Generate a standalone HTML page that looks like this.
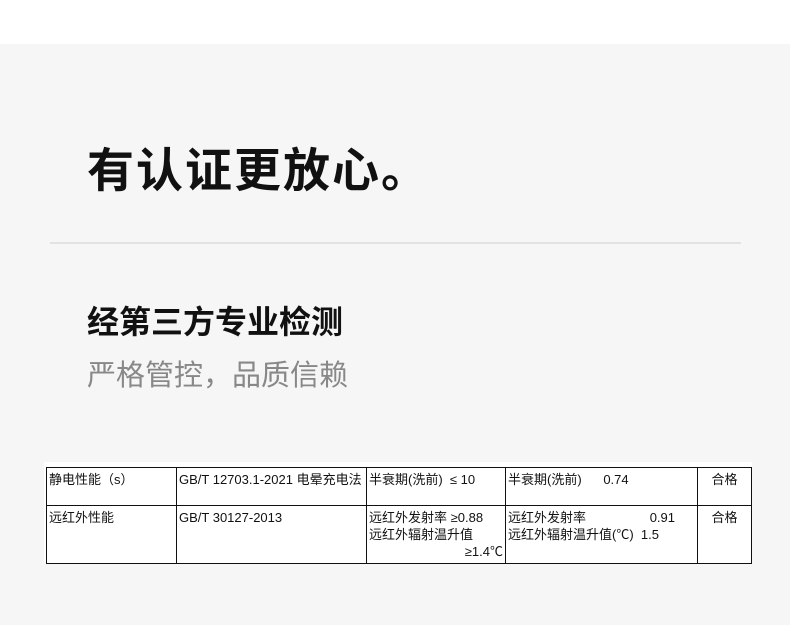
<!DOCTYPE html><html><head><meta charset="utf-8"><style>
body{margin:0;width:790px;height:625px;background:#fff;position:relative;overflow:hidden;font-family:"Liberation Sans","Noto Sans CJK SC",sans-serif}
.bg{position:absolute;left:0;top:44px;width:790px;height:581px;background:#f6f6f6}
.t{position:absolute;left:87px;top:141px;font-size:47px;font-weight:bold;color:#111;line-height:60px;letter-spacing:2px}
.hr{position:absolute;left:50px;top:242px;width:691px;height:2px;background:#e2e2e2}
.h2{position:absolute;left:87px;top:302px;font-size:32px;font-weight:bold;color:#111;line-height:40px}
.h3{position:absolute;left:87px;top:356px;font-size:29px;color:#888;line-height:40px}
.tb{position:absolute;left:44px;top:462px;width:708px;height:101px;background:#fff}
table{position:absolute;left:46px;top:467px;border-collapse:collapse;font-size:13px;color:#111;table-layout:fixed;width:705px}
td{border:1px solid #111;vertical-align:top;padding:3px 2px;line-height:17px;overflow:hidden}
</style></head><body>
<div class="bg"></div>
<div class="t">有认证更放心。</div>
<div class="hr"></div>
<div class="h2">经第三方专业检测</div>
<div class="h3">严格管控，品质信赖</div>
<div class="tb"></div>
<table>
<colgroup><col style="width:130px"><col style="width:190px"><col style="width:139px"><col style="width:192px"><col style="width:54px"></colgroup>
<tr style="height:38px"><td>静电性能（s）</td><td>GB/T 12703.1-2021 电晕充电法</td><td>半衰期(洗前) &nbsp;≤ 10</td><td>半衰期(洗前) &nbsp;&nbsp;&nbsp;&nbsp;&nbsp;0.74</td><td style="text-align:center">合格</td></tr>
<tr style="height:56px"><td>远红外性能</td><td>GB/T 30127-2013</td><td>远红外发射率 ≥0.88<br>远红外辐射温升值<br><span style="float:right">≥1.4℃</span></td><td>远红外发射率<span style="float:right;margin-right:20px">0.91</span><br>远红外辐射温升值(℃) &nbsp;1.5</td><td style="text-align:center">合格</td></tr>
</table>
</body></html>
